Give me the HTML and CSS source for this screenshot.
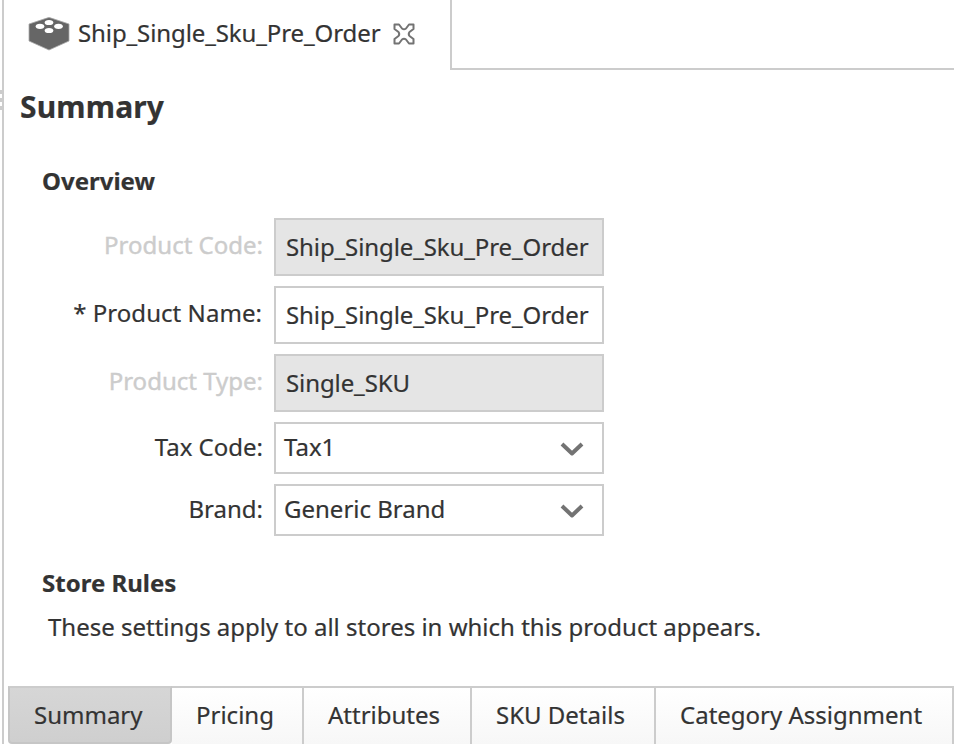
FILE: index.html
```html
<!DOCTYPE html>
<html lang="en"><head><meta charset="utf-8"><title>Ship_Single_Sku_Pre_Order</title><link rel="stylesheet" href="styles.css"></head>
<body>
<div class="rail"><i></i><i></i><i></i></div>
<main class="editor">
<header class="top"><div class="doc">
<svg class="cube" width="42" height="34" viewBox="0 0 42 34"><path d="M1 7 16 2q5-3 10 0l15 5v17L21 33 1 24z" fill="#666" stroke="#aaa" stroke-width=".8"/><g fill="#fff"><ellipse cx="21" cy="5.5" rx="4.3" ry="2.6"/><ellipse cx="12" cy="9.3" rx="4.3" ry="2.6"/><ellipse cx="30.5" cy="9.3" rx="4.3" ry="2.6"/><ellipse cx="21" cy="13.5" rx="4.3" ry="2.6"/></g></svg>
<span class="doc-name">Ship_Single_Sku_Pre_Order</span>
<svg class="close" width="22" height="22" viewBox="0 0 22 22"><path d="M1.5 1.5H6l3 4q2 1.5 4 0l3-4h4.500V6l-4 3q-1.500 2 0 4l4 3v4.500H16l-3-4q-2-1.500-4 0l-3 4H1.500V16l4-3q1.500-2 0-4l-4-3z" fill="#fff" stroke="#737373" stroke-width="2" stroke-linejoin="round"/></svg>
</div><div class="empty"></div></header>
<h1>Summary</h1>
<h2 class="overview">Overview</h2>
<form class="form">
<label class="off">Product Code:</label><div class="field gray name">Ship_Single_Sku_Pre_Order</div>
<label class="required">* Product Name:</label><div class="field name">Ship_Single_Sku_Pre_Order</div>
<label class="off">Product Type:</label><div class="field gray name">Single_SKU</div>
<label class="short">Tax Code:</label><div class="field select"><span>Tax1</span><svg width="26" height="18" viewBox="0 0 26 18"><path d="m3 4 10 9.500L23 4" fill="none" stroke="#737373" stroke-width="4" stroke-linejoin="round"/></svg></div>
<label class="short">Brand:</label><div class="field select"><span>Generic Brand</span><svg width="26" height="18" viewBox="0 0 26 18"><path d="m3 4 10 9.500L23 4" fill="none" stroke="#737373" stroke-width="4" stroke-linejoin="round"/></svg></div>
</form>
<h2 class="rules">Store Rules</h2>
<p>These settings apply to all stores in which this product appears.</p>
<nav><span class="tab t1">Summary</span><span class="tab t2">Pricing</span><span class="tab t3">Attributes</span><span class="tab t4">SKU Details</span><span class="tab t5">Category Assignment</span></nav>
</main></body></html>
```
FILE: styles.css
```css
*{box-sizing:border-box}
body{margin:0;width:954px;height:744px;overflow:hidden;background:#fff;color:#333;font:24px/34px "Noto Sans",sans-serif;display:flex;-webkit-text-stroke:.2px currentColor}
.rail{width:2px;padding-top:90px}
.rail i{display:block;width:2px;height:4px;margin-bottom:4px;background:#ccc}
.editor{width:952px;height:744px;border-left:2px solid #ccc;display:flex;flex-direction:column}
.top{height:70px;display:flex;flex:none}
.doc{width:446px;display:flex;padding:16px 0 0 24px}
.cube{margin-top:1px}
.doc-name{width:303px;margin:0 12px 0 8px;white-space:nowrap;letter-spacing:-.1px}
.close{margin-top:7px}
.empty{flex:1;border-left:2px solid #ccc;border-bottom:2px solid #ccc}
h1{font-size:30px;line-height:44px;margin:15px 0 0 16px;letter-spacing:.15px}
h2{font-size:24px;line-height:34px;margin:0 0 0 38px}
.overview{margin-top:35px}
.form{display:grid;grid-template-columns:259px 330px;grid-template-rows:58px 58px 58px 52px 52px;gap:10px 11px;margin-top:20px}
label{text-align:right;padding-top:10px;white-space:nowrap}
.off{color:#ccc;-webkit-text-stroke-width:.4px}
.required{padding-right:1px;letter-spacing:.05px}
.short{padding-top:8px}
.field{border:2px solid #ccc;padding:10px;white-space:nowrap}
.name{letter-spacing:-.1px}
.gray{background:#e5e5e5}
.select{padding:6px 17px 0 8px;display:flex;justify-content:space-between}
.select svg{margin-top:10px}
.rules{margin-top:30px}
p{margin:10px 0 0 44px;white-space:nowrap}
nav{display:flex;margin:auto 0 0 4px;height:58px;flex:none}
.tab{border-top:2px solid #ccc;border-right:2px solid #ccc;padding:10px 0 0 24px;white-space:nowrap;background:linear-gradient(#fff,#f7f7f7)}
.t1{width:164px;background:linear-gradient(#d6d6d6,#cfcfcf);border:2px solid #c6c6c6;border-top-color:#ccc;border-radius:0 0 4px 4px}.t2{width:132px}.t3{width:168px}.t4{width:184px}.t5{width:298px}
```
